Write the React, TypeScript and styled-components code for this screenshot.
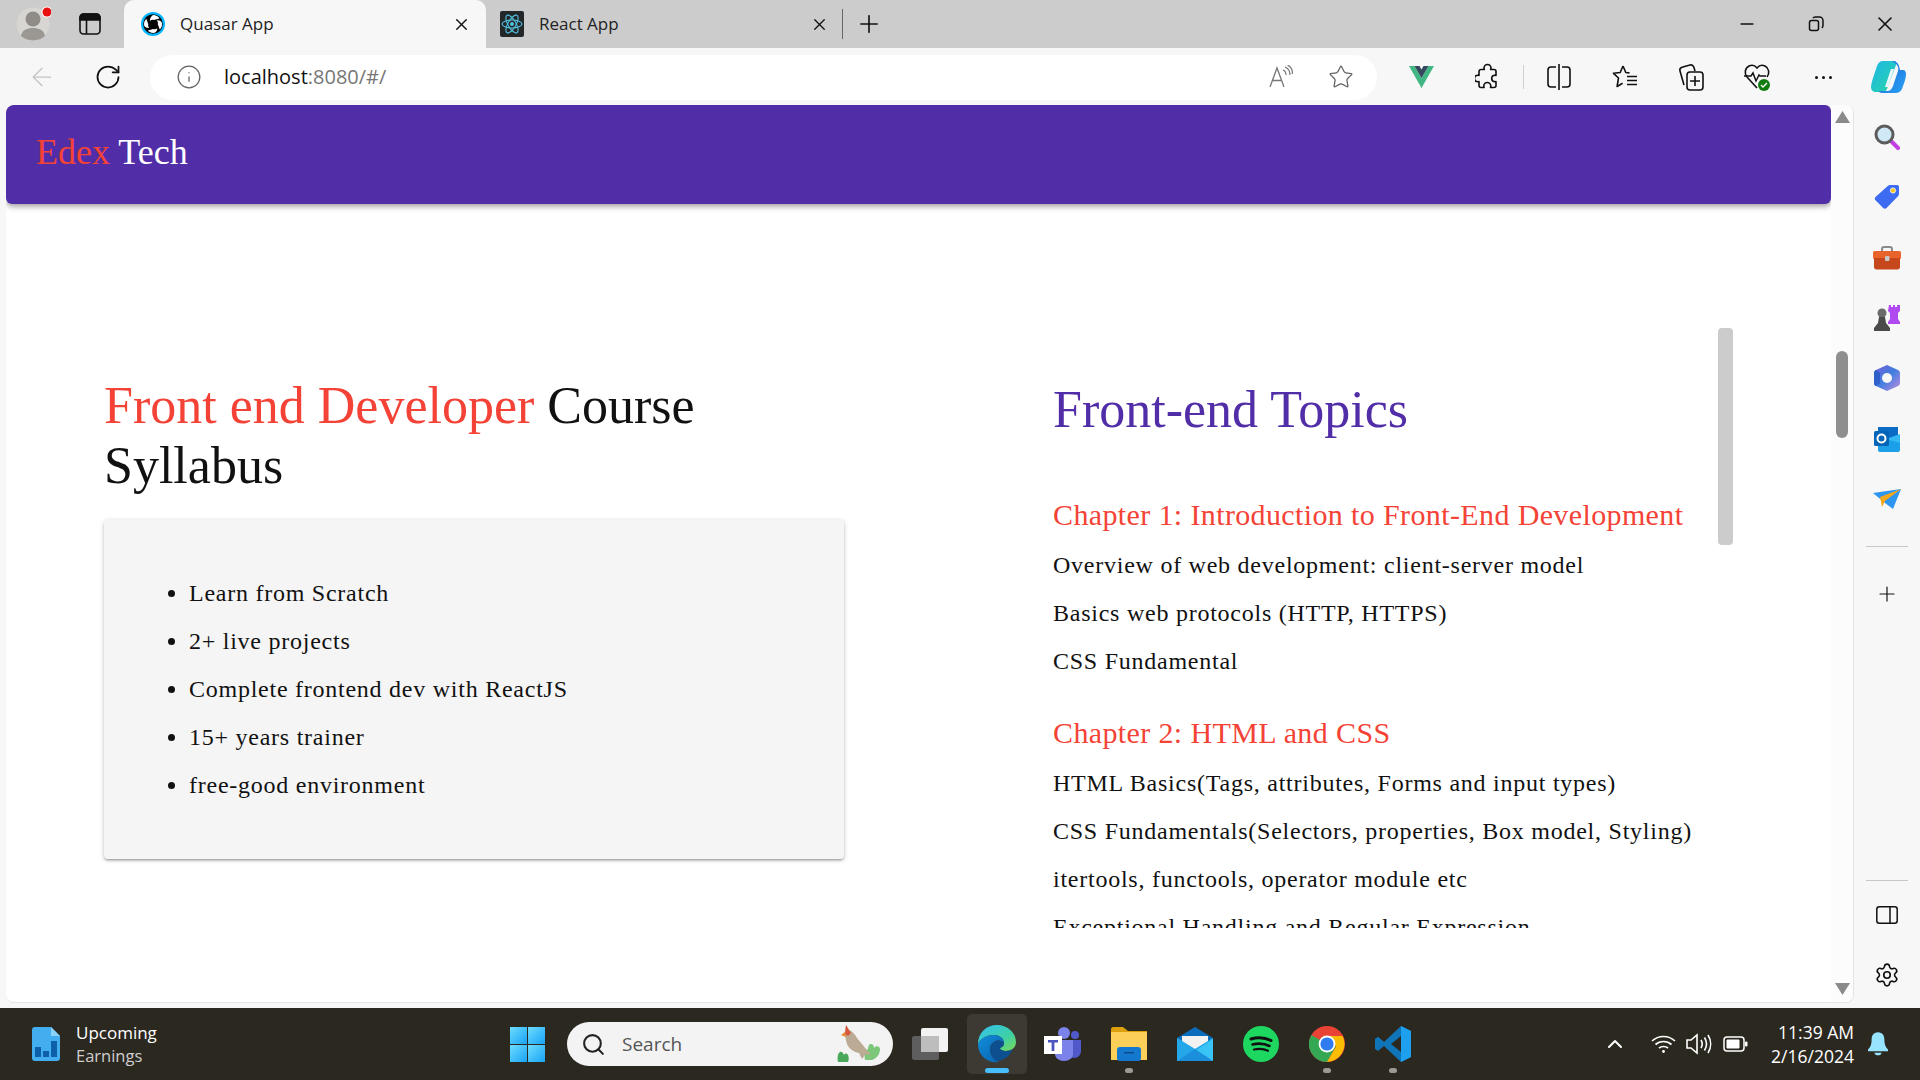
import { ReactNode } from "react";
import styled, { createGlobalStyle } from "styled-components";
import {
  ArrowLeft,
  ChevronUp,
  Info,
  Minus,
  Plus,
  RotateCw,
  Search,
  Settings,
  Star,
  X,
} from "lucide-react";

const GlobalStyle = createGlobalStyle`
  html, body {
    margin: 0;
    padding: 0;
    height: 100%;
    overflow: hidden;
    background: #f7f7f7;
  }
  * {
    box-sizing: border-box;
  }
`;

const UI_FONT = `"Open Sans", "Noto Sans", sans-serif`;
const PAGE_FONT = `"Liberation Serif", serif`;

const courseItems = [
  "Learn from Scratch",
  "2+ live projects",
  "Complete frontend dev with ReactJS",
  "15+ years trainer",
  "free-good environment",
];

const chapters = [
  {
    title: "Chapter 1: Introduction to Front-End Development",
    topics: [
      "Overview of web development: client-server model",
      "Basics web protocols (HTTP, HTTPS)",
      "CSS Fundamental",
    ],
  },
  {
    title: "Chapter 2: HTML and CSS",
    topics: [
      "HTML Basics(Tags, attributes, Forms and input types)",
      "CSS Fundamentals(Selectors, properties, Box model, Styling)",
      "itertools, functools, operator module etc",
      "Exceptional Handling and Regular Expression",
    ],
  },
];

function QuasarIcon() {
  return (
    <svg width="24" height="24" viewBox="0 0 24 24">
      <circle cx="12" cy="12" r="12" fill="#00b4ff" />
      <circle cx="12" cy="12" r="9.800" fill="#050505" />
      <g fill="#fff">
        <path d="M12 3c3 0 5.300 1.300 6.500 3.400l-5.600 1.700C11.500 7.500 10 7.900 9 8.900 8.700 6.700 9.900 4.400 12 3z" />
        <path d="M20.800 10.600c.6 2.900-.2 5.300-2 7l-2-5.400c.4-1.400 0-2.800-1-3.800 2-.4 3.900.4 5 2.200z" />
        <path d="M13.800 20.800c-2.900.5-5.400-.4-7-2.300l5.600-1.600c1.300.6 2.800.3 3.800-.6.300 1.800-.7 3.500-2.400 4.500z" />
        <path d="M3.200 13.800c-.6-2.900.3-5.300 2.100-7l2 5.400c-.4 1.400 0 2.800 1 3.800-2 .3-3.900-.5-5.100-2.200z" />
      </g>
    </svg>
  );
}

function ReactIcon() {
  return (
    <svg width="24" height="26" viewBox="0 0 24 26">
      <rect width="24" height="26" rx="2" fill="#23272a" />
      <g fill="none" stroke="#53c1de" strokeWidth="1.100">
        <ellipse cx="12" cy="13" rx="10" ry="4" />
        <ellipse cx="12" cy="13" rx="10" ry="4" transform="rotate(60 12 13)" />
        <ellipse cx="12" cy="13" rx="10" ry="4" transform="rotate(120 12 13)" />
      </g>
      <circle cx="12" cy="13" r="2" fill="#53c1de" />
    </svg>
  );
}

function ProfileIcon() {
  return (
    <svg width="36" height="36" viewBox="0 0 36 36">
      <circle cx="18" cy="18" r="16.500" fill="#d8d6d3" />
      <circle cx="18" cy="13" r="7.500" fill="#8f8b87" />
      <path d="M6 30c1-6 6-8 12-8s11 2 12 8c-3 2.800-7 4.400-12 4.400S9 32.800 6 30z" fill="#9b9793" />
      <circle cx="32" cy="6" r="5.500" fill="#fff" />
      <circle cx="32" cy="6" r="4.500" fill="#e81010" />
    </svg>
  );
}

function TabsIcon() {
  return (
    <svg width="22" height="22" viewBox="0 0 22 22" fill="none" stroke="#111" strokeWidth="1.600">
      <rect x="1" y="1" width="20" height="20" rx="3.500" />
      <path d="M1 4.500A3.500 3.500 0 0 1 4.500 1h13A3.500 3.500 0 0 1 21 4.500V7H1z" fill="#111" />
      <path d="M7.500 7v14" />
    </svg>
  );
}

function RestoreIcon() {
  return (
    <svg width="16" height="16" viewBox="0 0 16 16" fill="none" stroke="#111" strokeWidth="1.500">
      <rect x="1.500" y="4.500" width="9" height="10" rx="2" />
      <path d="M5 2.200C5.500 1.400 6.300 1 7.200 1h4.300C13.400 1 15 2.600 15 4.500v5c0 1-.5 1.800-1.200 2.300" />
    </svg>
  );
}

function ReadAloudIcon() {
  return (
    <svg width="26" height="24" viewBox="0 0 26 24" fill="none" stroke="#777" strokeWidth="1.300">
      <path d="M2 22 9 3l7 19M4.500 15.500h9" />
      <path d="M15 5c2 .8 3 2.500 3 5M17 2c3 1.200 5 4 5 8M19.500 0c3 1.500 5 5 5 9" strokeWidth="1.200" />
    </svg>
  );
}

function VueIcon() {
  return (
    <svg width="25" height="22" viewBox="0 0 25 22">
      <path d="M0 0h5.500l7 12 7-12H25L12.500 22z" fill="#41b883" />
      <path d="M5.500 0h5l2 3.500 2-3.500h5l-7 12z" fill="#35495e" />
    </svg>
  );
}

function ExtensionIcon() {
  return (
    <svg width="24" height="28" viewBox="0 0 24 28" fill="none" stroke="#111" strokeWidth="1.600" strokeLinejoin="round">
      <path d="M9 5a3.500 3.500 0 0 1 7 0c0 .6-.2 1-.4 1.500H19a2 2 0 0 1 2 2v4c-.4-.2-.6-.3-1-.3a3.300 3.300 0 0 0 0 6.600c.4 0 .6-.1 1-.3v4a2 2 0 0 1-2 2h-3.500c.2-.5.300-1 .3-1.500a3.500 3.500 0 0 0-7 0c0 .5.100 1 .3 1.500H6a2 2 0 0 1-2-2v-4c-.4.200-.8.300-1.200.3a3.300 3.300 0 0 1 0-6.600c.4 0 .8.100 1.200.3v-4a2 2 0 0 1 2-2h3.400C9.200 6 9 5.600 9 5z" />
    </svg>
  );
}

function SplitIcon() {
  return (
    <svg width="24" height="28" viewBox="0 0 24 28" fill="none" stroke="#111" strokeWidth="1.600">
      <path d="M9 4H4a3 3 0 0 0-3 3v14a3 3 0 0 0 3 3h5M15 4h5a3 3 0 0 1 3 3v14a3 3 0 0 1-3 3h-5M12 1v26" />
    </svg>
  );
}

function FavoritesIcon() {
  return (
    <svg width="26" height="26" viewBox="0 0 26 26" fill="none" stroke="#111" strokeWidth="1.600" strokeLinejoin="round">
      <path d="M11 2l2.800 6.500 3.700.4M11 2 8.200 8.500 1.500 9.300l5 4.700-1.400 8.500 5.500-3.300" />
      <path d="M15 12.500h10M15 16.500h10M15 20.500h10" />
    </svg>
  );
}

function CollectionsIcon() {
  return (
    <svg width="26" height="28" viewBox="0 0 26 28" fill="none" stroke="#111" strokeWidth="1.600">
      <rect x="9" y="9" width="16" height="18" rx="3" />
      <path d="M17 13v10M12 18h10" />
      <path d="M6 22 2 8c-.5-1.800.5-3.300 2-3.800L12 2c1.800-.5 3.200.5 3.800 2l1.200 4" />
    </svg>
  );
}

function HealthIcon() {
  return (
    <svg width="28" height="30" viewBox="0 0 28 30">
      <path
        d="M14 26 4 15C1 11.500 2 6 6 4c3-1.500 6-.5 8 2 2-2.500 5-3.500 8-2 4 2 5 7.500 2 11"
        fill="none"
        stroke="#111"
        strokeWidth="1.600"
      />
      <path d="M1 14h7l2-3 3 8 3-6 1 1h6" fill="none" stroke="#111" strokeWidth="1.500" />
      <circle cx="21" cy="23" r="6" fill="#107c10" />
      <path d="m18 23 2 2 4-4" fill="none" stroke="#fff" strokeWidth="1.400" />
    </svg>
  );
}

function CopilotIcon() {
  return (
    <svg width="36" height="36" viewBox="0 0 36 36">
      <defs>
        <linearGradient id="copA" x1="0" y1="0" x2="1" y2="1">
          <stop offset="0" stopColor="#1fb6e8" />
          <stop offset="1" stopColor="#27d6a5" />
        </linearGradient>
        <linearGradient id="copB" x1="0" y1="0" x2="1" y2="1">
          <stop offset="0" stopColor="#1a5fe0" />
          <stop offset="1" stopColor="#2aa5f0" />
        </linearGradient>
      </defs>
      <path d="M13 2h11c2 0 3 2 2 4l-9 24c-.8 2-2 3-4 3H6c-3 0-5-2-5-5 0-2 1-6 2-9l4-12c1-3 3-5 6-5z" fill="url(#copA)" />
      <path d="M22 2c4 0 6 2 7 5l1 4h3c2 0 3 2 3 4 0 3-1 7-3 12-1 4-3 7-7 7H12c-2 0-3-1-3-2h8c3 0 5-2 6-5l5-15c1-3 0-7-6-10z" fill="url(#copB)" />
      <path d="M21 10h3l-6 18h-3z" fill="#eaf6ff" />
    </svg>
  );
}

function MagnifierIcon() {
  return (
    <svg width="26" height="26" viewBox="0 0 26 26">
      <path d="m16 16 8 8" stroke="#c13fe0" strokeWidth="4" strokeLinecap="round" />
      <circle cx="10.500" cy="10.500" r="8.500" fill="#cfe9f7" stroke="#5c5c5c" strokeWidth="3" />
    </svg>
  );
}

function TagIcon() {
  return (
    <svg width="26" height="26" viewBox="0 0 26 26">
      <path d="M16 1h7c1.300 0 2 .7 2 2v7c0 1-.4 1.700-1 2.300L12.500 24c-1 1-2.300 1-3.300 0L1.500 16.300c-1-1-1-2.300 0-3.300L13.700 2C14.400 1.300 15 1 16 1z" fill="#3d6cf2" />
      <circle cx="19" cy="6.500" r="2.600" fill="#f6c61c" stroke="#fff" strokeWidth=".8" />
    </svg>
  );
}

function ToolboxIcon() {
  return (
    <svg width="28" height="24" viewBox="0 0 28 24">
      <path d="M9 6V3c0-1 1-2 2-2h6c1 0 2 1 2 2v3" fill="none" stroke="#8a8a8a" strokeWidth="2" />
      <rect y="5" width="28" height="8" rx="1.500" fill="#e8642a" />
      <path d="M1 12h26v9c0 1.500-1 2.500-2.500 2.500h-21C2 23.500 1 22.500 1 21z" fill="#c7471c" />
      <rect x="12" y="10" width="4.500" height="5" rx="1" fill="#c8c8c8" />
    </svg>
  );
}

function ChessIcon() {
  return (
    <svg width="28" height="28" viewBox="0 0 28 28">
      <path d="M16 1h2v2h2V1h2v2h2V1h3v6l-2 2v6l2 3v2H15v-2l2-3V9l-2-2z" fill="#b04af0" />
      <circle cx="9" cy="9" r="4.500" fill="#6a6a6a" />
      <path d="M6 13h6l1 6 4 5v3H1v-3l4-5z" fill="#4a4a4a" />
    </svg>
  );
}

function M365Icon() {
  return (
    <svg width="26" height="28" viewBox="0 0 26 28">
      <defs>
        <linearGradient id="msA" x1="0" y1="0" x2="1" y2="1">
          <stop offset="0" stopColor="#7b5cd6" />
          <stop offset=".5" stopColor="#3f7fe0" />
          <stop offset="1" stopColor="#c58ae0" />
        </linearGradient>
      </defs>
      <path d="M13 1 24 6c1 .5 2 1.500 2 3v10c0 1.500-1 2.500-2 3l-11 5L2 22c-1-.5-2-1.500-2-3V9c0-1.500 1-2.500 2-3z" fill="url(#msA)" />
      <path d="M0 9c0-1.500 1-2.500 2-3l4 3v10l-4 3c-1-.5-2-1.500-2-3z" fill="#2f5fc8" />
      <circle cx="13" cy="14" r="5" fill="#f7f7f7" />
    </svg>
  );
}

function OutlookIcon() {
  return (
    <svg width="26" height="26" viewBox="0 0 26 26">
      <rect x="4" y="1" width="20" height="12" fill="#0a6cc4" />
      <path d="M4 12h22v12a2 2 0 0 1-2 2H6a2 2 0 0 1-2-2z" fill="#1a9fe8" />
      <path d="m12 13 14-5v9z" fill="#35b8f1" />
      <rect y="5" width="15" height="15" rx="1.500" fill="#0364b8" />
      <circle cx="7.500" cy="12.500" r="4" fill="none" stroke="#fff" strokeWidth="2" />
    </svg>
  );
}

function SendIcon() {
  return (
    <svg width="28" height="20" viewBox="0 0 28 20">
      <path d="M0 4 28 0 20 20 12 14z" fill="#2e95f0" />
      <path d="M28 0 7 8l2 10 3-6z" fill="#f5a81c" />
    </svg>
  );
}

function PanelIcon() {
  return (
    <svg width="22" height="18" viewBox="0 0 22 18" fill="none" stroke="#111" strokeWidth="1.500">
      <rect x=".8" y=".8" width="20.400" height="16.400" rx="2.500" />
      <path d="M14 1v16" />
    </svg>
  );
}

function WidgetIcon() {
  return (
    <svg width="28" height="34" viewBox="0 0 28 34">
      <path d="M3 0h16l9 9v22a3 3 0 0 1-3 3H3a3 3 0 0 1-3-3V3a3 3 0 0 1 3-3z" fill="#42aef0" />
      <path d="M19 0v9h9z" fill="#8ad2fa" />
      <rect x="3" y="20" width="6" height="10" fill="#0d5fa8" />
      <rect x="11" y="24" width="6" height="6" fill="#0d5fa8" />
      <rect x="19" y="14" width="6" height="16" fill="#0d5fa8" />
    </svg>
  );
}

function WindowsIcon() {
  return (
    <svg width="35" height="35" viewBox="0 0 35 35">
      <defs>
        <linearGradient id="winA" x1="0" y1="0" x2="1" y2="1">
          <stop offset="0" stopColor="#6fdcff" />
          <stop offset="1" stopColor="#17a3f5" />
        </linearGradient>
      </defs>
      <rect width="17" height="17" fill="url(#winA)" />
      <rect x="18" width="17" height="17" fill="url(#winA)" />
      <rect y="18" width="17" height="17" fill="url(#winA)" />
      <rect x="18" y="18" width="17" height="17" fill="url(#winA)" />
    </svg>
  );
}

function BirdIcon() {
  return (
    <svg width="46" height="38" viewBox="0 0 46 38">
      <path d="M1 37c-1-5 0-9 2-10s3 1 4 3c1-2 3-2 4 0s1 5 0 7z" fill="#4aa85a" />
      <path d="M28 35c-1-5 0-9 3-11 0-3 1-5 3-5s3 2 3 4c2-3 6-2 6 1 0 5-3 9-8 11z" fill="#7cc77a" />
      <path d="M8 7 9 0l3 5c3 1 6 4 8 8l14 17-5-1-4 5-3-6c-5-1-10-4-12-9-1-3-2-7-2-12z" fill="#bcab94" />
      <path d="M8 9 9 0l3 5 2 3-3 3z" fill="#d9583c" />
      <path d="M8 7 4 10l5 2z" fill="#e8882a" />
    </svg>
  );
}

function TaskViewIcon() {
  return (
    <svg width="36" height="32" viewBox="0 0 36 32">
      <rect y="8" width="27" height="24" rx="2" fill="#5e5e5e" />
      <rect x="9" width="27" height="24" rx="2" fill="#f2f2f2" />
      <rect x="9" y="8" width="18" height="16" fill="#bdbdbd" />
    </svg>
  );
}

function EdgeIcon() {
  return (
    <svg width="38" height="38" viewBox="0 0 38 38">
      <defs>
        <linearGradient id="edgeA" x1="0" y1="0" x2="1" y2="1">
          <stop offset="0" stopColor="#35c1f1" />
          <stop offset=".6" stopColor="#3dd0a5" />
          <stop offset="1" stopColor="#7ed957" />
        </linearGradient>
        <linearGradient id="edgeB" x1="0" y1="0" x2="1" y2="1">
          <stop offset="0" stopColor="#0f8fdc" />
          <stop offset="1" stopColor="#0b5fa8" />
        </linearGradient>
      </defs>
      <path d="M19 0c11 0 19 8 19 17 0 6-5 9-10 9-3 0-6-1-6-3 3-1 4-3 4-5 0-5-5-8-10-8C9 10 3 13 0 19 0 8 8 0 19 0z" fill="url(#edgeA)" />
      <path d="M0 19c3-6 9-9 16-9 5 0 10 3 10 8-3-3-7-3-10-1-4 2-5 7-3 12 1 3 4 6 8 8C9 39 0 30 0 19z" fill="url(#edgeB)" />
      <path d="M13 29c-2-5-1-10 3-12 3-2 7-2 10 1 0 2-1 4-4 5 0 2 3 3 6 3 3 0 5-1 7-2-3 7-9 12-17 12-2-2-4-4-5-7z" fill="#0d4f8f" />
    </svg>
  );
}

function TeamsIcon() {
  return (
    <svg width="38" height="34" viewBox="0 0 38 34">
      <circle cx="20" cy="6" r="6" fill="#7b83eb" />
      <circle cx="31" cy="8" r="4" fill="#5059c9" />
      <path d="M25 13h12v11c0 4-3 7-7 7-2 0-4-1-5-2z" fill="#5059c9" />
      <path d="M11 13h18v14c0 4-4 7-9 7s-9-3-9-7z" fill="#7b83eb" />
      <rect y="9" width="18" height="18" fill="#fff" />
      <path d="M4 13h10v2.400h-3.600V24H7.600v-8.600H4z" fill="#4b53bc" />
    </svg>
  );
}

function ExplorerIcon() {
  return (
    <svg width="36" height="34" viewBox="0 0 36 34">
      <path d="M0 2c0-1 1-2 2-2h10l5 4h19v6H0z" fill="#dca00c" />
      <path d="M0 5h36v28H0z" fill="#fcd058" />
      <rect x="6" y="20" width="24" height="14" rx="3" fill="#1478cf" />
      <rect x="13" y="25" width="10" height="1.500" fill="#0a4d8f" />
    </svg>
  );
}

function MailIcon() {
  return (
    <svg width="36" height="34" viewBox="0 0 36 34">
      <path d="M0 11 18 0l18 11v8H0z" fill="#0c6cbc" />
      <path d="M5 9h26v9l-13 8-13-8z" fill="#f2f2f2" />
      <path d="M0 11l18 11 18-11v23H0z" fill="#39c4f5" />
      <path d="M0 34V11l18 11 18-11v1L18 24z" fill="#1490df" opacity=".55" />
      <path d="M0 34l18-12 18 12z" fill="#1b8fdc" />
    </svg>
  );
}

function SpotifyIcon() {
  return (
    <svg width="36" height="36" viewBox="0 0 36 36">
      <circle cx="18" cy="18" r="18" fill="#1ed760" />
      <g fill="none" stroke="#111" strokeLinecap="round">
        <path d="M8 13c7-2 14-1.500 20 1.500" strokeWidth="3" />
        <path d="M9.500 18.500c6-1.500 12-1 17 1.500" strokeWidth="2.600" />
        <path d="M11 23.500c5-1 10-.7 14 1.300" strokeWidth="2.200" />
      </g>
    </svg>
  );
}

function ChromeIcon() {
  return (
    <svg width="36" height="36" viewBox="0 0 36 36">
      <circle cx="18" cy="18" r="18" fill="#e94335" />
      <path d="M18 18 2.400 9A18 18 0 0 0 18 36l9-16z" fill="#34a853" />
      <path d="M18 10h15.600A18 18 0 0 1 18 36l9-15.500z" fill="#fbbc04" />
      <circle cx="18" cy="18" r="8.400" fill="#fff" />
      <circle cx="18" cy="18" r="6.600" fill="#2f7bf0" />
    </svg>
  );
}

function VSCodeIcon() {
  return (
    <svg width="36" height="36" viewBox="0 0 36 36">
      <path d="M26 0 36 5v26l-10 5L9 20l-6 5-3-2v-10l3-2 6 5z" fill="#0f74b8" />
      <path d="M26 0 36 5v26l-10 5z" fill="#1fa0ee" />
      <path d="M26 10v16l-10-8z" fill="#2b2820" />
      <path d="m0 13 3-2 6 5-3 3z" fill="#0f74b8" />
    </svg>
  );
}

function WifiIcon() {
  return (
    <svg width="25" height="20" viewBox="0 0 25 20" fill="none" stroke="#fff" strokeWidth="1.700">
      <path d="M1 7c6.500-6 16.500-6 23 0M4.500 10.500c4.500-4 11.500-4 16 0M8 14c2.500-2 6.500-2 9 0" />
      <circle cx="12.500" cy="17.500" r="1.400" fill="#fff" stroke="none" />
    </svg>
  );
}

function SoundIcon() {
  return (
    <svg width="26" height="22" viewBox="0 0 26 22" fill="none" stroke="#fff" strokeWidth="1.600">
      <path d="M1 7h4l6-5v18l-6-5H1z" />
      <path d="M15 7c1.500 2.500 1.500 5.500 0 8M18.500 4.500c2.500 4 2.500 9 0 13M22 2c3.500 5.500 3.500 12.500 0 18" />
    </svg>
  );
}

function BatteryIcon() {
  return (
    <svg width="25" height="16" viewBox="0 0 25 16">
      <rect x="1" y="1" width="20" height="14" rx="3" fill="none" stroke="#fff" strokeWidth="1.500" />
      <rect x="3.500" y="3.500" width="13" height="9" rx="1" fill="#fff" />
      <rect x="22" y="5.500" width="2.500" height="5" rx="1" fill="#fff" />
    </svg>
  );
}

function BellIcon() {
  return (
    <svg width="20" height="24" viewBox="0 0 22 26">
      <path d="M11 0c5 0 7 4 7 8 0 5 1 8 4 11v2H0v-2c3-3 4-6 4-11 0-4 2-8 7-8z" fill="#96e4ff" />
      <path d="M7 22.500h8c-.5 2-2 3-4 3s-3.500-1-4-3z" fill="#96e4ff" />
    </svg>
  );
}

function ScrollArrow({ down }: { down?: boolean }) {
  return (
    <svg width="15" height="12" viewBox="0 0 15 12">
      <path d={down ? "M0 0h15l-7.500 12z" : "M0 12h15L7.500 0z"} fill="#8a8a8a" />
    </svg>
  );
}

function TabItem({
  icon,
  title,
  active,
}: {
  icon: ReactNode;
  title: string;
  active?: boolean;
}) {
  return (
    <Tab $active={active}>
      {icon}
      <TabTitle>{title}</TabTitle>
      <TabClose>
        <X size={19} strokeWidth={1.7} color="#111" />
      </TabClose>
    </Tab>
  );
}

const sidebarApps = [
  <MagnifierIcon key="search" />,
  <TagIcon key="tag" />,
  <ToolboxIcon key="tools" />,
  <ChessIcon key="games" />,
  <M365Icon key="m365" />,
  <OutlookIcon key="outlook" />,
  <SendIcon key="send" />,
];

const taskbarApps = [
  { icon: <EdgeIcon key="edge" />, state: "active" },
  { icon: <TeamsIcon key="teams" />, state: "" },
  { icon: <ExplorerIcon key="explorer" />, state: "open" },
  { icon: <MailIcon key="mail" />, state: "" },
  { icon: <SpotifyIcon key="spotify" />, state: "" },
  { icon: <ChromeIcon key="chrome" />, state: "open" },
  { icon: <VSCodeIcon key="vscode" />, state: "open" },
];

export default function App() {
  return (
    <Screen>
      <GlobalStyle />
      <TitleBar>
        <Slot $w={66}>
          <ProfileIcon />
        </Slot>
        <Slot $w={48}>
          <TabsIcon />
        </Slot>
        <TabStrip>
          <TabItem icon={<QuasarIcon />} title="Quasar App" active />
          <TabItem icon={<ReactIcon />} title="React App" />
        </TabStrip>
        <TabDivider />
        <Slot $w={52}>
          <Plus size={28} strokeWidth={1.4} color="#111" />
        </Slot>
        <Spacer />
        <Slot $w={70}>
          <Minus size={20} strokeWidth={2} color="#111" />
        </Slot>
        <Slot $w={68}>
          <RestoreIcon />
        </Slot>
        <Slot $w={70}>
          <X size={24} strokeWidth={1.6} color="#111" />
        </Slot>
      </TitleBar>

      <Toolbar>
        <Slot $w={84}>
          <ArrowLeft size={30} strokeWidth={1} color="#c4c4c4" />
        </Slot>
        <Slot $w={48}>
          <RotateCw size={28} strokeWidth={1.5} color="#111" />
        </Slot>
        <AddressBar>
          <Slot $w={50}>
            <Info size={26} strokeWidth={1.2} color="#666" />
          </Slot>
          <Url>
            localhost<UrlRest>:8080/#/</UrlRest>
          </Url>
          <Spacer />
          <Slot $w={60}>
            <ReadAloudIcon />
          </Slot>
          <Slot $w={60}>
            <Star size={26} strokeWidth={1.2} color="#666" />
          </Slot>
        </AddressBar>
        <Slot $w={66} $first>
          <VueIcon />
        </Slot>
        <Slot $w={66}>
          <ExtensionIcon />
        </Slot>
        <ToolbarDivider />
        <Slot $w={66}>
          <SplitIcon />
        </Slot>
        <Slot $w={66}>
          <FavoritesIcon />
        </Slot>
        <Slot $w={66}>
          <CollectionsIcon />
        </Slot>
        <Slot $w={66}>
          <HealthIcon />
        </Slot>
        <Slot $w={66}>
          <MoreDots>
            <i />
            <i />
            <i />
          </MoreDots>
        </Slot>
        <Slot $w={64}>
          <CopilotIcon />
        </Slot>
      </Toolbar>

      <Middle>
        <BrowserWindow>
          <Page>
            <Header>
              <Logo>
                <RedText>Edex</RedText> Tech
              </Logo>
            </Header>
            <Main>
              <LeftColumn>
                <PageTitle>
                  <RedText>Front end Developer</RedText> Course Syllabus
                </PageTitle>
                <Card>
                  <BulletList>
                    {courseItems.map((item) => (
                      <li key={item}>{item}</li>
                    ))}
                  </BulletList>
                </Card>
              </LeftColumn>
              <TopicsPanel>
                <TopicsHeading>Front-end Topics</TopicsHeading>
                {chapters.map((chapter) => (
                  <Chapter key={chapter.title}>
                    <ChapterTitle>{chapter.title}</ChapterTitle>
                    {chapter.topics.map((topic) => (
                      <Topic key={topic}>{topic}</Topic>
                    ))}
                  </Chapter>
                ))}
                <InnerThumb />
              </TopicsPanel>
            </Main>
          </Page>
          <PageScrollbar>
            <ScrollArrow />
            <PageThumb />
            <Spacer />
            <ScrollArrow down />
          </PageScrollbar>
        </BrowserWindow>

        <Sidebar>
          {sidebarApps.map((icon, i) => (
            <SideSlot key={i}>{icon}</SideSlot>
          ))}
          <SideRule />
          <SideSlot>
            <Plus size={24} strokeWidth={1.2} color="#111" />
          </SideSlot>
          <Spacer />
          <SideRule $tight />
          <SideSlot>
            <PanelIcon />
          </SideSlot>
          <SideSlot>
            <Settings size={26} strokeWidth={1.5} color="#111" />
          </SideSlot>
        </Sidebar>
      </Middle>

      <Taskbar>
        <WidgetArea>
          <WidgetIcon />
          <WidgetText>
            <strong>Upcoming</strong>
            <span>Earnings</span>
          </WidgetText>
        </WidgetArea>
        <Slot $w={50}>
          <WindowsIcon />
        </Slot>
        <SearchBox>
          <Search size={25} strokeWidth={2} color="#222" />
          <SearchLabel>Search</SearchLabel>
          <Spacer />
          <BirdIcon />
        </SearchBox>
        <Slot $w={74}>
          <TaskViewIcon />
        </Slot>
        {taskbarApps.map((app, i) => (
          <TaskApp key={i} $active={app.state === "active"}>
            {app.icon}
            {app.state && <TaskIndicator $active={app.state === "active"} />}
          </TaskApp>
        ))}
        <Spacer />
        <Slot $w={60}>
          <ChevronUp size={24} strokeWidth={2} color="#fff" />
        </Slot>
        <Slot $w={36}>
          <WifiIcon />
        </Slot>
        <Slot $w={36}>
          <SoundIcon />
        </Slot>
        <Slot $w={36}>
          <BatteryIcon />
        </Slot>
        <Clock>
          <span>11:39 AM</span>
          <span>2/16/2024</span>
        </Clock>
        <Slot $w={48}>
          <BellIcon />
        </Slot>
      </Taskbar>
    </Screen>
  );
}

const Screen = styled.div`
  width: 1920px;
  height: 1080px;
  display: flex;
  flex-direction: column;
  overflow: hidden;
  background: #f7f7f7;
`;

const Spacer = styled.div`
  flex: 1;
`;

const Slot = styled.div<{ $w: number; $first?: boolean }>`
  width: ${(props) => props.$w}px;
  flex-shrink: 0;
  display: flex;
  align-items: center;
  justify-content: center;
  margin-left: ${(props) => (props.$first ? "11px" : "0")};
`;

const TitleBar = styled.div`
  height: 48px;
  display: flex;
  align-items: center;
  background: #cccccc;
`;

const TabStrip = styled.div`
  display: flex;
  align-self: stretch;
  margin-left: 10px;
`;

const Tab = styled.div<{ $active?: boolean }>`
  width: ${(props) => (props.$active ? "362px" : "356px")};
  display: flex;
  align-items: center;
  gap: 15px;
  padding: 0 ${(props) => (props.$active ? "15px" : "13px")} 0
    ${(props) => (props.$active ? "17px" : "14px")};
  background: ${(props) => (props.$active ? "#f7f7f7" : "transparent")};
  border-radius: 10px 10px 0 0;
`;

const TabTitle = styled.span`
  padding-bottom: 2px;
  font-family: ${UI_FONT};
  font-size: 17px;
  color: #222;
`;

const TabClose = styled.span`
  margin-left: auto;
  display: flex;
`;

const TabDivider = styled.div`
  width: 1px;
  height: 30px;
  background: #666;
`;

const Toolbar = styled.div`
  height: 57px;
  display: flex;
  align-items: center;
  padding-top: 1px;
`;

const AddressBar = styled.div`
  width: 1227px;
  height: 45px;
  margin-left: 18px;
  flex-shrink: 0;
  display: flex;
  align-items: center;
  padding: 0 6px 0 14px;
  background: #fff;
  border-radius: 23px;
`;

const Url = styled.span`
  margin-left: 10px;
  padding-bottom: 2px;
  font-family: ${UI_FONT};
  font-size: 20px;
  color: #111;
`;

const UrlRest = styled.span`
  color: #767676;
`;

const ToolbarDivider = styled.div`
  width: 2px;
  height: 24px;
  margin: 0 2px 0 3px;
  background: #cfcfcf;
`;

const MoreDots = styled.div`
  display: flex;
  gap: 4px;

  & > i {
    width: 3px;
    height: 3px;
    border-radius: 50%;
    background: #111;
  }
`;

const Middle = styled.div`
  flex: 1;
  min-height: 0;
  display: flex;
  padding-left: 6px;
`;

const BrowserWindow = styled.div`
  width: 1848px;
  height: 898px;
  display: flex;
  background: #fff;
  border-radius: 8px;
  border-right: 1px solid #e4e4e4;
  border-bottom: 1px solid #e4e4e4;
  overflow: hidden;
`;

const Page = styled.div`
  width: 1825px;
  display: flex;
  flex-direction: column;
`;

const Header = styled.header`
  height: 99px;
  flex-shrink: 0;
  display: flex;
  align-items: center;
  padding: 0 0 6px 30px;
  background: #512da8;
  border-radius: 6px;
  box-shadow: 0 2px 4px -1px rgba(0, 0, 0, 0.2), 0 4px 5px rgba(0, 0, 0, 0.14),
    0 1px 10px rgba(0, 0, 0, 0.12);
`;

const Logo = styled.div`
  font-family: ${PAGE_FONT};
  font-size: 36px;
  color: #fff;
`;

const RedText = styled.span`
  color: #f44336;
`;

const Main = styled.main`
  display: flex;
  align-items: flex-start;
  gap: 209px;
  padding: 124px 0 0 98px;
`;

const LeftColumn = styled.section`
  width: 740px;
  flex-shrink: 0;
  padding-top: 48px;
`;

const PageTitle = styled.h1`
  margin: 0 0 24px;
  font-family: ${PAGE_FONT};
  font-size: 52px;
  font-weight: 400;
  line-height: 60px;
  color: #111;
`;

const Card = styled.div`
  height: 339px;
  padding: 49px 45px;
  background: #f5f5f5;
  border-radius: 4px;
  box-shadow: 0 1px 5px rgba(0, 0, 0, 0.2), 0 2px 2px rgba(0, 0, 0, 0.14),
    0 3px 1px -2px rgba(0, 0, 0, 0.12);
`;

const BulletList = styled.ul`
  margin: 0;
  padding-left: 40px;
  font-family: ${PAGE_FONT};
  font-size: 24px;
  line-height: 48px;
  letter-spacing: 0.75px;
  color: #111;
`;

const TopicsPanel = styled.section`
  position: relative;
  width: 680px;
  height: 600px;
  flex-shrink: 0;
  padding-top: 52px;
  overflow: hidden;
`;

const InnerThumb = styled.div`
  position: absolute;
  top: 0;
  right: 0;
  width: 15px;
  height: 217px;
  background: #cccccc;
  border-radius: 4px;
`;

const TopicsHeading = styled.h2`
  margin: 0 0 51px;
  font-family: ${PAGE_FONT};
  font-size: 52px;
  font-weight: 400;
  line-height: 60px;
  color: #512da8;
`;

const Chapter = styled.div`
  margin-bottom: 24px;
`;

const ChapterTitle = styled.h3`
  margin: 0 0 2px;
  font-family: ${PAGE_FONT};
  font-size: 30px;
  font-weight: 400;
  line-height: 48px;
  letter-spacing: 0.375px;
  color: #f44336;
`;

const Topic = styled.p`
  margin: 0;
  font-family: ${PAGE_FONT};
  font-size: 24px;
  line-height: 48px;
  letter-spacing: 0.75px;
  color: #111;
`;

const PageScrollbar = styled.div`
  position: relative;
  flex: 1;
  display: flex;
  flex-direction: column;
  align-items: center;
  padding: 6px 0 7px;
  background: #fcfcfc;
`;

const PageThumb = styled.div`
  width: 12px;
  height: 87px;
  margin-top: 228px;
  background: #8f8f8f;
  border-radius: 6px;
`;

const Sidebar = styled.aside`
  flex: 1;
  height: 903px;
  display: flex;
  flex-direction: column;
  align-items: center;
  padding: 2px 0 3px;
`;

const SideSlot = styled.div`
  height: 60.3px;
  flex-shrink: 0;
  display: flex;
  align-items: center;
  justify-content: center;
`;

const SideRule = styled.div<{ $tight?: boolean }>`
  width: 42px;
  height: 1px;
  flex-shrink: 0;
  margin: 17px 0 ${(props) => (props.$tight ? "3px" : "17px")};
  background: #c8c8c8;
`;

const Taskbar = styled.footer`
  height: 72px;
  flex-shrink: 0;
  display: flex;
  align-items: center;
  padding-right: 18px;
  background: #2b2820;
`;

const WidgetArea = styled.div`
  width: 502px;
  flex-shrink: 0;
  display: flex;
  align-items: center;
  gap: 16px;
  padding-left: 32px;
`;

const WidgetText = styled.div`
  display: flex;
  flex-direction: column;
  gap: 1px;
  font-family: ${UI_FONT};
  line-height: 22px;

  & > strong {
    font-size: 17px;
    font-weight: 400;
    color: #fff;
  }

  & > span {
    font-size: 16.5px;
    color: #cfcfcf;
  }
`;

const SearchBox = styled.div`
  width: 326px;
  height: 44px;
  margin-left: 15px;
  flex-shrink: 0;
  display: flex;
  align-items: center;
  gap: 16px;
  padding: 0 10px 0 14px;
  background: #f3f3f3;
  border-radius: 22px;
`;

const SearchLabel = styled.span`
  font-family: ${UI_FONT};
  font-size: 19px;
  color: #555;
`;

const TaskApp = styled.div<{ $active?: boolean }>`
  position: relative;
  width: 60px;
  height: 60px;
  margin-right: 6px;
  display: flex;
  align-items: center;
  justify-content: center;
  border-radius: 5px;
  background: ${(props) => (props.$active ? "#3c3a33" : "transparent")};
`;

const TaskIndicator = styled.span<{ $active?: boolean }>`
  position: absolute;
  bottom: 1px;
  left: 50%;
  transform: translateX(-50%);
  width: ${(props) => (props.$active ? "24px" : "8px")};
  height: 5px;
  border-radius: 3px;
  background: ${(props) => (props.$active ? "#47bdfa" : "#9c9a94")};
`;

const Clock = styled.div`
  width: 101px;
  display: flex;
  flex-direction: column;
  align-items: flex-end;
  gap: 1px;
  font-family: ${UI_FONT};
  font-size: 17.5px;
  line-height: 23px;
  color: #fff;
`;
